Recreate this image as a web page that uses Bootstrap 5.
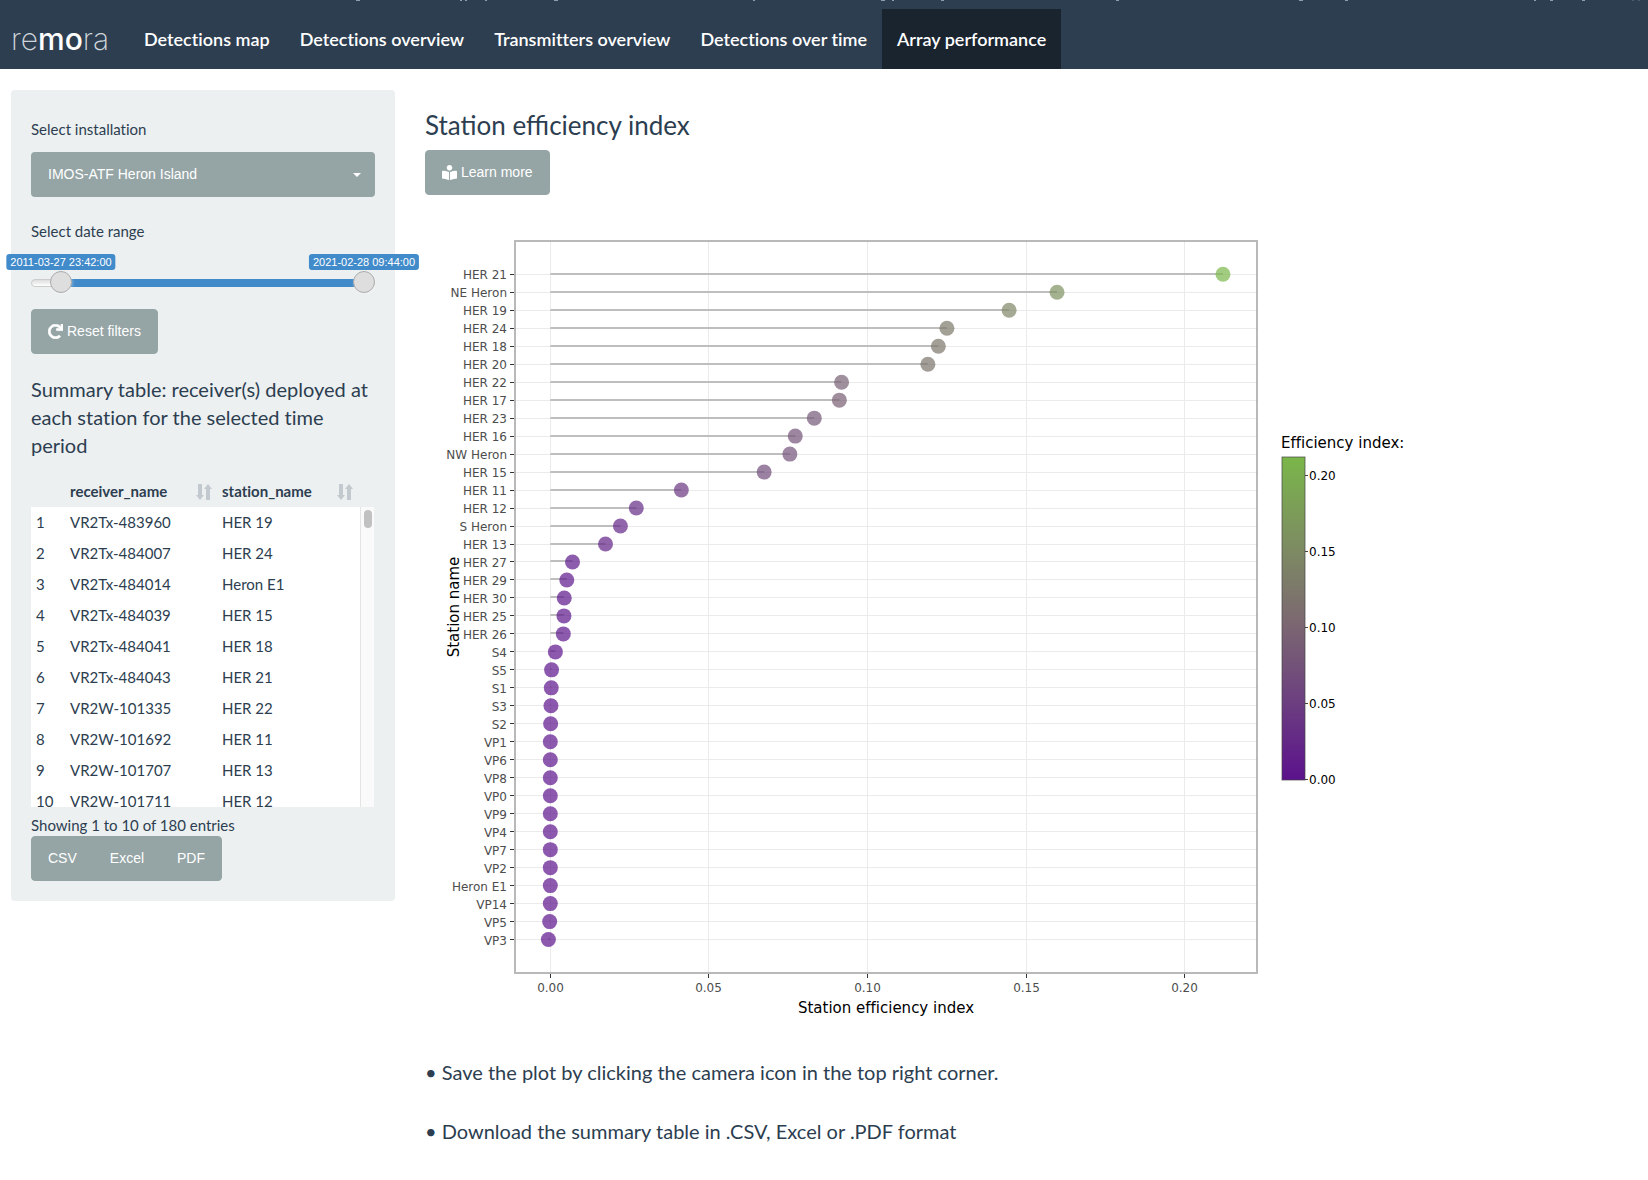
<!DOCTYPE html>
<html lang="en">
<head>
<meta charset="utf-8">
<meta name="viewport" content="width=device-width, initial-scale=1">
<title>remora</title>
<link href="https://cdn.jsdelivr.net/npm/bootstrap@5.3.0/dist/css/bootstrap.min.css" rel="stylesheet">
<style>
  body { font-family: Lato, sans-serif; font-size: 15px; line-height: 21px; color: #2c3e50; font-variant-ligatures: none; }
  .topbar { background: #2d3e50; padding: 9px 11px 0; }
  .brand-name { font-family: Inter, sans-serif; font-size: 30px; line-height: 60px; font-weight: 200; color: #cfd5da; width: 118px; text-decoration: none; }
  .brand-name strong { font-weight: 500; color: #fff; }
  .topbar .nav-link { padding: 0 15px; font-size: 18px; line-height: 60px; font-weight: 600; color: #fff; white-space: nowrap; }
  .topbar .nav-link.active { background: #1a242f; }
  .title-edge { top: 0; left: 0; }
  .page-area { padding: 21px 11px 0; }
  .page-row { --bs-gutter-x: 30px; }
  .side-panel { background: #ecf0f1; border-radius: 4px; padding: 29px 20px 20px; }
  .field-label { display: block; margin-bottom: 12px; }
  .btn-soft { --bs-btn-color: #fff; --bs-btn-bg: #95a5a6; --bs-btn-border-color: #95a5a6; --bs-btn-hover-color: #fff; --bs-btn-hover-bg: #798d8f; --bs-btn-hover-border-color: #798d8f;
    font-family: "Liberation Sans", sans-serif; font-size: 14px; line-height: 21px; padding: 11px 16px; border-radius: 4px; }
  .btn-soft svg { width: 15px; height: 15px; fill: #fff; margin-right: 4px; }
  .pick { width: 100%; height: 45px; appearance: none; border: 0; border-radius: 4px; background: #95a5a6; color: #fff; font-family: "Liberation Sans", sans-serif; font-size: 14px; padding: 0 40px 0 17px; }
  .pick-caret { right: 14px; top: 21px; border: 4px solid transparent; border-top-color: #fff; border-bottom: 0; pointer-events: none; }
  .slider-box { height: 55px; }
  .slider-track { left: 0; right: 0; top: 25px; height: 8px; border: 1px solid #ccc; border-radius: 8px; background: linear-gradient(#dedede, #fff); }
  .slider-fill { left: 30px; right: 11px; top: 25px; height: 8px; background: #428bca; }
  .slider-box input { left: 0; top: 17px; width: 100%; height: 22px; margin: 0; background: none; appearance: none; pointer-events: none; }
  .slider-box input::-webkit-slider-thumb { appearance: none; width: 22px; height: 22px; border: 1px solid #ababab; border-radius: 50%; background: #dedede; box-shadow: 1px 1px 3px rgba(255,255,255,.3); pointer-events: auto; }
  .slider-tip { top: 0; font-family: "Liberation Sans", sans-serif; font-size: 11px; line-height: 16px; padding: 0 4px; border-radius: 3px; background: #428bca; color: #fff; white-space: nowrap; transform: translateX(-50%); }
  .tip-from { left: 30px; }
  .tip-to { left: calc(100% - 11px); }
  .panel-title { font-size: 20px; line-height: 28px; font-weight: 400; margin: 21px 0 15px; }
  .grid-wrap { height: 333px; overflow: hidden; margin-right: 1px; }
  .data-grid { width: 100%; table-layout: fixed; border-collapse: collapse; }
  .data-grid th, .data-grid td { padding: 5px; }
  .data-grid thead th { padding: 7px 5px 5px; font-weight: 700; }
  .data-grid tbody { background: #fff; }
  .col-num { width: 34px; }
  .col-rec { width: 152px; }
  .data-grid thead svg { width: 16px; height: 16px; fill: #c3cacf; }
  .sort-last { margin-right: 16px; }
  .scroll-rail { right: 0; bottom: 0; width: 14px; height: 300px; background: #fafafa; border-left: 1px solid #e4e4e4; }
  .scroll-rail span { display: block; width: 8px; height: 18px; margin: 3px 0 0 3px; border-radius: 4px; background: #c1c1c1; }
  .grid-info { margin: 8px 0 0; }
  .main-title { font-size: 26px; line-height: 32px; font-weight: 400; margin: 19px 0 9px; font-variant-ligatures: normal; }
  .plot-box { margin-top: 20px; }
  .plot-box svg { display: block; width: 100%; font-family: "DejaVu Sans", sans-serif; }
  .tips { list-style: none; font-size: 20px; line-height: 28px; margin: 0; padding: 23px 0; }
  .tips li { margin-bottom: 31px; }
</style>
<script src="https://cdn.jsdelivr.net/npm/bootstrap@5.3.0/dist/js/bootstrap.bundle.min.js" defer></script>
</head>
<body>
<nav class="topbar d-flex position-relative overflow-hidden">
  <svg class="title-edge position-absolute" width="1648" height="1" fill="#8f9daa" aria-hidden="true"><path d="M356 0h4v1h-4zM460 0h2v1h-2zM465 0h2v1h-2zM485 0h2v1h-2zM554 0h4v1h-4zM753 0h2v1h-2zM881 0h4v1h-4zM892 0h2v1h-2zM941 0h3v1h-3zM1116 0h3v1h-3zM1299 0h4v1h-4zM1345 0h3v1h-3zM1534 0h2v1h-2zM1550 0h3v1h-3zM1582 0h3v1h-3z"/><path fill="#4a5b6c" d="M1632 0h2v1h-2zM1638 0h2v1h-2z"/></svg>
  <a class="brand-name" href="#">re<strong>mo</strong>ra</a>
  <ul class="nav flex-nowrap">
    <li><a class="nav-link" href="#">Detections map</a></li>
    <li><a class="nav-link" href="#">Detections overview</a></li>
    <li><a class="nav-link" href="#">Transmitters overview</a></li>
    <li><a class="nav-link" href="#">Detections over time</a></li>
    <li><a class="nav-link active" aria-current="page" href="#">Array performance</a></li>
  </ul>
</nav>

<div class="container-fluid page-area">
  <div class="row page-row">
    <aside class="col-3">
      <div class="side-panel">
        <label class="field-label" for="installation">Select installation</label>
        <div class="position-relative mb-4">
          <select class="pick" id="installation"><option>IMOS-ATF Heron Island</option></select>
          <span class="pick-caret position-absolute"></span>
        </div>
        <label class="field-label" for="date-from">Select date range</label>
        <div class="slider-box position-relative">
          <div class="slider-track position-absolute"></div>
          <div class="slider-fill position-absolute"></div>
          <input class="position-absolute" type="range" id="date-from" min="0" max="1000" value="59">
          <input class="position-absolute" type="range" aria-label="Date range end" min="0" max="1000" value="1000">
          <span class="slider-tip tip-from position-absolute">2011-03-27 23:42:00</span>
          <span class="slider-tip tip-to position-absolute">2021-02-28 09:44:00</span>
        </div>
        <button class="btn btn-soft d-inline-flex align-items-center" type="button"><svg viewBox="0 0 512 512" stroke="#fff" stroke-width="24" aria-hidden="true"><path d="M500.33 0h-47.41a12 12 0 0 0-12 12.57l4 82.76A247.42 247.42 0 0 0 256 8C119.34 8 7.9 119.53 8 256.19 8.1 393.07 119.1 504 256 504a247.1 247.1 0 0 0 166.18-63.91 12 12 0 0 0 .48-17.43l-34-34a12 12 0 0 0-16.38-.55A176 176 0 1 1 402.1 157.8l-101.53-4.87a12 12 0 0 0-12.57 12v47.41a12 12 0 0 0 12 12h200.33a12 12 0 0 0 12-12V12a12 12 0 0 0-12-12z"/></svg>Reset filters</button>
        <h2 class="panel-title">Summary table: receiver(s) deployed at each station for the selected time period</h2>
        <div class="grid-wrap position-relative">
          <table class="data-grid">
            <colgroup><col class="col-num"><col class="col-rec"><col></colgroup>
            <thead>
              <tr>
                <th></th>
                <th><div class="d-flex justify-content-between align-items-center">receiver_name<svg viewBox="0 0 16 16" aria-hidden="true"><path d="M2 0h4v11h2l-4 5L0 11h2zM10 16h4V5h2l-4-5L8 5h2z"/></svg></div></th>
                <th><div class="d-flex justify-content-between align-items-center">station_name<svg class="sort-last" viewBox="0 0 16 16" aria-hidden="true"><path d="M2 0h4v11h2l-4 5L0 11h2zM10 16h4V5h2l-4-5L8 5h2z"/></svg></div></th>
              </tr>
            </thead>
            <tbody>
              <tr><td>1</td><td>VR2Tx-483960</td><td>HER 19</td></tr>
              <tr><td>2</td><td>VR2Tx-484007</td><td>HER 24</td></tr>
              <tr><td>3</td><td>VR2Tx-484014</td><td>Heron E1</td></tr>
              <tr><td>4</td><td>VR2Tx-484039</td><td>HER 15</td></tr>
              <tr><td>5</td><td>VR2Tx-484041</td><td>HER 18</td></tr>
              <tr><td>6</td><td>VR2Tx-484043</td><td>HER 21</td></tr>
              <tr><td>7</td><td>VR2W-101335</td><td>HER 22</td></tr>
              <tr><td>8</td><td>VR2W-101692</td><td>HER 11</td></tr>
              <tr><td>9</td><td>VR2W-101707</td><td>HER 13</td></tr>
              <tr><td>10</td><td>VR2W-101711</td><td>HER 12</td></tr>
            </tbody>
          </table>
          <div class="scroll-rail position-absolute"><span></span></div>
        </div>
        <p class="grid-info">Showing 1 to 10 of 180 entries</p>
        <div class="btn-group">
          <button class="btn btn-soft" type="button">CSV</button>
          <button class="btn btn-soft" type="button">Excel</button>
          <button class="btn btn-soft" type="button">PDF</button>
        </div>
      </div>
    </aside>

    <main class="col-9">
      <h1 class="main-title">Station efficiency index</h1>
      <button class="btn btn-soft d-inline-flex align-items-center" type="button"><svg viewBox="0 0 512 512" aria-hidden="true"><path d="M352 96c0-53.02-42.98-96-96-96s-96 42.98-96 96 42.98 96 96 96 96-42.98 96-96zM233.59 241.1c-59.33-36.32-155.43-46.3-203.79-49.05C13.55 191.13 0 203.51 0 219.14v222.8c0 14.33 11.59 26.28 26.49 27.05 43.66 2.29 131.99 10.68 193.04 41.43 9.37 4.72 20.48-1.71 20.48-11.87V252.56c-.01-4.67-2.32-8.95-6.42-11.46zm248.61-49.05c-48.35 2.74-144.46 12.73-203.78 49.05-4.1 2.51-6.41 6.96-6.41 11.63v245.79c0 10.19 11.14 16.63 20.54 11.9 61.04-30.72 149.32-39.11 192.97-41.4 14.9-.78 26.49-12.73 26.49-27.06V219.14c-.01-15.63-13.56-28.01-29.81-27.09z"/></svg>Learn more</button>
      <div class="plot-box">
        <svg id="plot" viewBox="0 0 1212 820" role="img" aria-label="Station efficiency index by station"></svg>
      </div>
      <ul class="tips">
        <li>• Save the plot by clicking the camera icon in the top right corner.</li>
        <li>• Download the summary table in .CSV, Excel or .PDF format</li>
      </ul>
    </main>
  </div>
</div>

<script>
  const stations = [
    ["HER 21", 0.2120], ["NE Heron", 0.1597], ["HER 19", 0.1446], ["HER 24", 0.1250], ["HER 18", 0.1223], ["HER 20", 0.1190],
    ["HER 22", 0.0918], ["HER 17", 0.0911], ["HER 23", 0.0832], ["HER 16", 0.0772], ["NW Heron", 0.0755], ["HER 15", 0.0674],
    ["HER 11", 0.0413], ["HER 12", 0.0271], ["S Heron", 0.0221], ["HER 13", 0.0174], ["HER 27", 0.0070], ["HER 29", 0.0052],
    ["HER 30", 0.0044], ["HER 25", 0.0043], ["HER 26", 0.0041], ["S4", 0.0016], ["S5", 0.0004], ["S1", 0.0003], ["S3", 0.0002],
    ["S2", 0.0001], ["VP1", 0], ["VP6", 0], ["VP8", 0], ["VP0", 0], ["VP9", 0], ["VP4", 0], ["VP7", 0], ["VP2", 0],
    ["Heron E1", 0], ["VP14", 0], ["VP5", -0.0002], ["VP3", -0.0006]
  ];
  const stops = [[0, [91, 18, 140]], [0.05, [108, 62, 128]], [0.106, [124, 106, 112]], [0.15, [125, 138, 99]], [0.212, [122, 182, 74]]];
  function colour(v) {
    v = Math.max(0, Math.min(0.212, v));
    let i = 1;
    while (v > stops[i][0]) i++;
    const [a, ca] = stops[i - 1], [b, cb] = stops[i], t = (v - a) / (b - a);
    return `rgb(${ca.map((c, k) => Math.round(c + (cb[k] - c) * t))})`;
  }
  const box = { l: 90, r: 832, t: 26, b: 758 };
  const x = v => 125.3 + v * 3173;
  const y = i => 59.3 + i * 17.98;
  const snap = n => Math.floor(n) + 0.5;
  let s = `<defs><linearGradient id="ramp" x1="0" y1="1" x2="0" y2="0">${stops.map(([v, c]) => `<stop offset="${v / 0.212}" stop-color="rgb(${c})"/>`).join("")}</linearGradient></defs>`;
  const ticks = [0, 0.05, 0.1, 0.15, 0.2];
  for (const t of ticks) {
    const p = snap(x(t));
    s += `<path d="M${p} ${box.t}V${box.b}" stroke="#ebebeb"/><path d="M${p} ${box.b + 1}v4" stroke="#333"/>
      <text x="${p}" y="777" font-size="12" fill="#4d4d4d" text-anchor="middle">${t.toFixed(2)}</text>`;
  }
  stations.forEach(([n], i) => {
    const p = snap(y(i));
    s += `<path d="M${box.l} ${p}H${box.r}" stroke="#ebebeb"/><path d="M85 ${p}h4" stroke="#333"/>
      <text x="82" y="${Math.round(y(i)) + 5}" font-size="12" fill="#4d4d4d" text-anchor="end">${n}</text>`;
  });
  stations.forEach(([, v], i) => { s += `<path d="M${x(0)} ${snap(y(i)) - 0.5}H${x(v)}" stroke="#bebebe" stroke-width="2"/>`; });
  stations.forEach(([, v], i) => { s += `<circle cx="${x(v)}" cy="${y(i)}" r="7.5" fill="${colour(v)}" fill-opacity=".7"/>`; });
  s += `<rect x="${box.l}" y="${box.t}" width="${box.r - box.l}" height="${box.b - box.t}" fill="none" stroke="#7f7f7f" stroke-opacity=".55" stroke-width="2"/>
    <text x="461" y="798" font-size="15" text-anchor="middle">Station efficiency index</text>
    <text transform="translate(34 392) rotate(-90)" font-size="15" text-anchor="middle">Station name</text>
    <text x="856" y="233" font-size="15">Efficiency index:</text>
    <rect x="857" y="242" width="23" height="323" fill="url(#ramp)" stroke="#444" stroke-opacity=".7"/>`;
  for (const t of ticks) {
    const p = 564.5 - t * 1520;
    s += `<path d="M880 ${p}h3" stroke="#444"/><text x="884" y="${p + 4.5}" font-size="12">${t.toFixed(2)}</text>`;
  }
  document.getElementById("plot").innerHTML = s;
</script>
</body>
</html>
